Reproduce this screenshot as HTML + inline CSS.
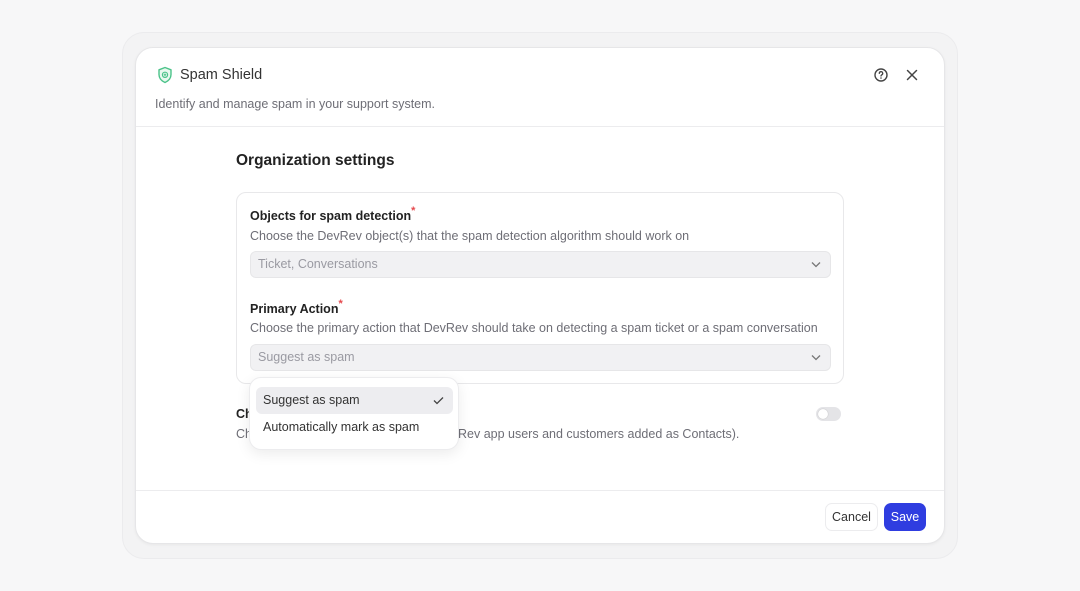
<!DOCTYPE html>
<html><head><meta charset="utf-8"><style>
*{box-sizing:border-box;margin:0;padding:0}
body{width:1080px;height:591px;background:#f7f7f8;font-family:"Liberation Sans",sans-serif;position:relative;overflow:hidden}
.outer{position:absolute;left:122px;top:32px;width:836px;height:527px;border:1px solid #ebebed;border-radius:22px;background:#f3f3f4}
.card{position:absolute;left:135px;top:47px;width:810px;height:497px;background:#fff;border-radius:18px;border:1px solid #e6e6e8;box-shadow:0 1px 3px rgba(0,0,0,.05)}
.a{position:absolute;white-space:nowrap}
.hr{position:absolute;left:0;right:0;height:1px;background:#ececee}
.box{position:absolute;left:100px;top:144px;width:608px;height:192px;border:1px solid #e8e8ea;border-radius:10px}
.lbl{font-size:12.5px;color:#222;font-weight:bold}
.sub{font-size:12.5px;color:#6e6e76}
.sel{position:absolute;left:13px;width:581px;height:27px;background:#f1f1f3;border:1px solid #e6e6e8;border-radius:6px;font-size:12.5px;color:#9a9aa2;padding:5px 7px}
.star{color:#e5484d;font-size:11px;vertical-align:top;position:relative;top:-4px}
.chev{position:absolute;right:9px;top:9px}
</style></head><body>
<div class="outer"></div>
<div class="card">
  <svg class="a" style="left:20px;top:18px" width="18" height="18" viewBox="0 0 18 18"><path d="M9 1.5 L15 3.8 V8.5 C15 12.5 12.3 15 9 16.5 C5.7 15 3 12.5 3 8.5 V3.8 Z" fill="#e9f8ee" stroke="#4cc38a" stroke-width="1.4" stroke-linejoin="round"/><circle cx="9" cy="8.8" r="2.6" fill="none" stroke="#4cc38a" stroke-width="1.2"/><path d="M9 7.5v2.6M7.7 8.8h2.6" stroke="#4cc38a" stroke-width="1"/></svg>
  <div class="a" style="left:44px;top:19px;font-size:14.5px;color:#333">Spam Shield</div>
  <div class="a" style="left:19px;top:49px;font-size:12.5px;color:#6e6e76">Identify and manage spam in your support system.</div>
  <svg class="a" style="left:737px;top:19px" width="16" height="16" viewBox="0 0 16 16"><circle cx="8" cy="8" r="6" fill="none" stroke="#444" stroke-width="1.4"/><path d="M6.3 6.4a1.7 1.7 0 1 1 2.4 1.5c-.5.3-.7.6-.7 1.1" fill="none" stroke="#444" stroke-width="1.3" stroke-linecap="round"/><circle cx="8" cy="11" r=".8" fill="#444"/></svg>
  <svg class="a" style="left:768px;top:19px" width="16" height="16" viewBox="0 0 16 16"><path d="M3.5 3.5l9 9M12.5 3.5l-9 9" stroke="#444" stroke-width="1.5" stroke-linecap="round"/></svg>
  <div class="hr" style="top:78px"></div>
  <div class="a" style="left:100px;top:104px;font-size:15.5px;color:#222;font-weight:bold">Organization settings</div>
  <div class="box">
    <div class="a lbl" style="left:13px;top:16px">Objects for spam detection<span class="star">*</span></div>
    <div class="a sub" style="left:13px;top:36px">Choose the DevRev object(s) that the spam detection algorithm should work on</div>
    <div class="sel" style="top:58px">Ticket, Conversations<svg class="chev" width="10" height="7" viewBox="0 0 10 7"><path d="M1 1.5l4 4 4-4" fill="none" stroke="#777" stroke-width="1.3"/></svg></div>
    <div class="a lbl" style="left:13px;top:109px">Primary Action<span class="star">*</span></div>
    <div class="a sub" style="left:13px;top:128px">Choose the primary action that DevRev should take on detecting a spam ticket or a spam conversation</div>
    <div class="sel" style="top:151px">Suggest as spam<svg class="chev" width="10" height="7" viewBox="0 0 10 7"><path d="M1 1.5l4 4 4-4" fill="none" stroke="#777" stroke-width="1.3"/></svg></div>
  </div>
  <div class="a lbl" style="left:100px;top:359px">Ch</div>
  <div class="a sub" style="left:100px;top:379px">Ch&nbsp;&nbsp;&nbsp;&nbsp;&nbsp;&nbsp;&nbsp;&nbsp;&nbsp;&nbsp;&nbsp;&nbsp;&nbsp;&nbsp;&nbsp;&nbsp;&nbsp;&nbsp;&nbsp;&nbsp;&nbsp;&nbsp;&nbsp;&nbsp;&nbsp;&nbsp;&nbsp;&nbsp;&nbsp;&nbsp;&nbsp;&nbsp;&nbsp;&nbsp;&nbsp;&nbsp;&nbsp;&nbsp;&nbsp;&nbsp;&nbsp;&nbsp;&nbsp;&nbsp;&nbsp;&nbsp;&nbsp;&nbsp;&nbsp;&nbsp;&nbsp;&nbsp;&nbsp;&nbsp;&nbsp;&nbsp;&nbsp;&nbsp;&nbsp;&nbsp;&nbsp;&nbsp;&nbsp;&nbsp;&nbsp;&nbsp;&nbsp;&nbsp;&nbsp;&nbsp;&nbsp;&nbsp;&nbsp;&nbsp;</div>
  <div class="a sub" style="left:322px;top:379px">Rev app users and customers added as Contacts).</div>
  <div class="a" style="left:680px;top:359px;width:25px;height:14px;border-radius:7px;background:#e4e4e7"><div style="position:absolute;left:2px;top:2px;width:10px;height:10px;border-radius:50%;background:#fff;box-shadow:0 0 1px rgba(0,0,0,.3)"></div></div>
  <div class="hr" style="top:442px"></div>
  <div class="a" style="left:689px;top:455px;width:53px;height:28px;border:1px solid #ececee;border-radius:7px;font-size:12.5px;color:#333;text-align:center;line-height:26px">Cancel</div>
  <div class="a" style="left:748px;top:455px;width:42px;height:28px;background:#2f3de0;border-radius:7px;font-size:12.5px;color:#fff;text-align:center;line-height:28px">Save</div>
</div>
<div class="a" style="left:249px;top:377px;width:210px;height:73px;background:#fff;border:1px solid #ececee;border-radius:12px;box-shadow:0 4px 14px rgba(0,0,0,.08)">
  <div class="a" style="left:6px;top:9px;width:197px;height:27px;background:#ededf0;border-radius:6px"></div>
  <div class="a" style="left:13px;top:15px;font-size:12.5px;color:#333">Suggest as spam</div>
  <svg class="a" style="left:183px;top:18px" width="11" height="9" viewBox="0 0 11 9"><path d="M1 4.5l3 3 6-6" fill="none" stroke="#444" stroke-width="1.3"/></svg>
  <div class="a" style="left:13px;top:42px;font-size:12.5px;color:#333">Automatically mark as spam</div>
</div>
</body></html>
